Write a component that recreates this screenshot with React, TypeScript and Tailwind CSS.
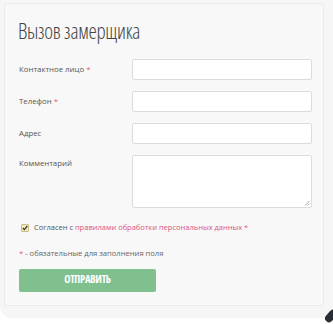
import React from "react";

export default function App() {
  const label = "text-[7.8px] text-[#555] leading-none";
  const star = <span className="text-[#e0607e]"> *</span>;
  return (
    <div className="w-[333px] h-[324px] bg-white relative overflow-hidden" style={{ fontFamily: '"Open Sans", sans-serif' }}>
      <div className="w-[333px] h-[318px] bg-[#f6f6f6] rounded-b-[12px] pt-[3px] pl-[4px] pr-[9px]">
        <div className="h-[303px] bg-[#f8f8f8] border border-[#ebebeb] rounded-tr-[4px] pl-[13px] pr-[11px]">
          <h1 className="text-[22px] font-light text-[#444] leading-none pt-[15px] [font-stretch:75%] tracking-[-0.3px] origin-left scale-x-[0.95]">Вызов замерщика</h1>
          <div className="mt-[18px] flex flex-col gap-[11px] pl-[1px]">
            {[
              ["Контактное лицо", true],
              ["Телефон", true],
              ["Адрес", false],
            ].map(([t, req]) => (
              <div key={t as string} className="flex items-center h-[21px]">
                <div className={`w-[113px] ${label}`}>
                  {t as string}
                  {req ? star : null}
                </div>
                <div className="w-[181px] h-[21px] bg-white border border-[#dcdcdc] rounded-[2px]" />
              </div>
            ))}
            <div className="flex items-start">
              <div className={`w-[113px] ${label} pt-[5px]`}>Комментарий</div>
              <div className="w-[181px] h-[53px] bg-white border border-[#dcdcdc] rounded-[2px] relative">
                <svg className="absolute right-[1px] bottom-[1px]" width="6" height="6" viewBox="0 0 6 6">
                  <path d="M5.5 1 L1 5.5 M5.5 3.5 L3.5 5.5" stroke="#999" strokeWidth="0.8" />
                </svg>
              </div>
            </div>
          </div>
          <div className="mt-[16px] flex items-center pl-[3px] h-[8px]">
            <div className="w-[8px] h-[8px] bg-[#f3e8b8] border border-[#cdbf8a] rounded-[1px] flex items-center justify-center">
              <svg width="6" height="6" viewBox="0 0 6 6">
                <path d="M0.8 3 L2.4 4.6 L5.3 1" stroke="#333" strokeWidth="1.2" fill="none" />
              </svg>
            </div>
            <span className="ml-[5px] text-[7.5px] text-[#555] leading-none">
              Согласен с <span className="text-[#d9557f]">правилами обработки персональных данных</span>
              {star}
            </span>
          </div>
          <div className="mt-[18px] text-[7.6px] text-[#666] leading-none pl-[1px]">
            <span className="text-[#e0607e]">*</span> - обязательные для заполнения поля
          </div>
          <button className="mt-[11px] ml-[1px] w-[137px] h-[23px] bg-[#80c08f] rounded-[2px] text-white text-[10.5px] font-bold tracking-[-0.3px] [font-stretch:75%] flex items-center justify-center">
            ОТПРАВИТЬ
          </button>
        </div>
      </div>
      <div className="absolute right-[-2px] bottom-[1px] w-[8px] h-[14px] bg-[#2a2d36] rounded-full rotate-[40deg]" />
    </div>
  );
}
